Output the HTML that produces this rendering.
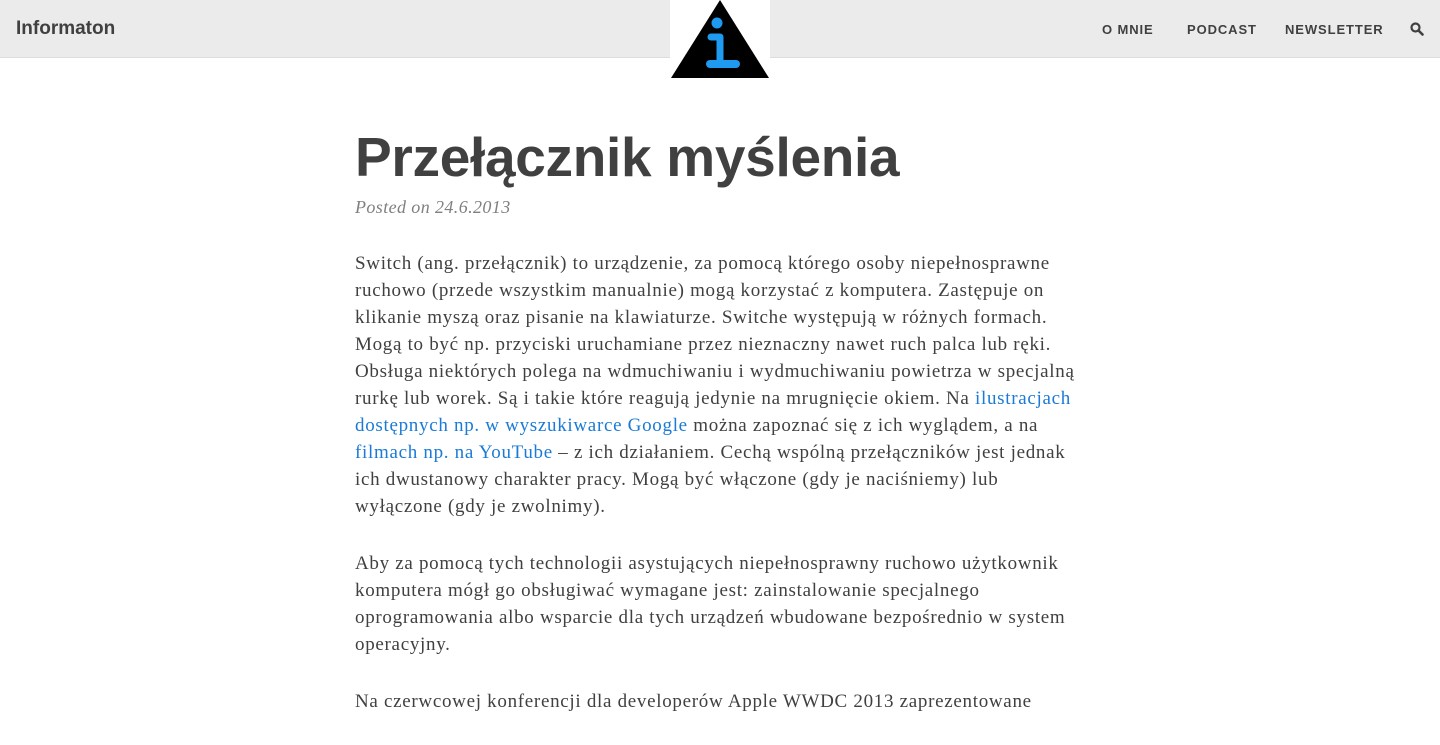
<!DOCTYPE html>
<html><head><meta charset="utf-8"><style>
*{margin:0;padding:0;box-sizing:border-box}
body{width:1440px;height:720px;overflow:hidden;background:#fff;font-family:"Liberation Serif",serif;color:#404040}
.hdr{position:absolute;left:0;top:0;width:1440px;height:58px;background:#ebebeb;border-bottom:1px solid #ddd}
.brand{position:absolute;left:16px;top:18px;font:bold 19px "Liberation Sans",sans-serif;color:#404040}
.nav{position:absolute;top:22px;font:bold 13px "Liberation Sans",sans-serif;letter-spacing:0.9px;color:#404040}
.logo{position:absolute;left:670px;top:0;width:100px;height:80px;background:#fff}
h1{position:absolute;left:355px;top:125px;font:bold 55px "Liberation Sans",sans-serif;color:#404040;letter-spacing:-0.3px;white-space:nowrap}
.meta{position:absolute;left:355px;top:197px;font-style:italic;font-size:18px;letter-spacing:0.4px;color:#808080}
.post{position:absolute;left:355px;top:250px;width:760px;font-size:19px;letter-spacing:0.7px;line-height:27px;color:#404040;white-space:nowrap}
.post p{margin-bottom:30px}
a{color:#1a7ad6;text-decoration:none}
</style></head><body>
<div class="hdr">
<div class="brand">Informaton</div>
<div class="nav" style="left:1102px">O MNIE</div>
<div class="nav" style="left:1187px">PODCAST</div>
<div class="nav" style="left:1285px">NEWSLETTER</div>
<svg style="position:absolute;left:1410px;top:22px" width="14" height="14" viewBox="0 0 14 14"><circle cx="5.5" cy="5.5" r="4" fill="none" stroke="#404040" stroke-width="2.2"/><line x1="8.5" y1="8.5" x2="12.5" y2="12.5" stroke="#404040" stroke-width="2.6" stroke-linecap="round"/></svg>
</div>
<div class="logo"><svg width="100" height="80" viewBox="0 0 100 80"><polygon points="50,0 99,78 1,78" fill="#000"/><circle cx="47" cy="23" r="5.5" fill="#1e9af0"/><path d="M41 37 H50 V62" fill="none" stroke="#1e9af0" stroke-width="7" stroke-linecap="round" stroke-linejoin="round"/><line x1="40" y1="64" x2="66" y2="64" stroke="#1e9af0" stroke-width="8" stroke-linecap="round"/></svg></div>
<h1>Przełącznik myślenia</h1>
<div class="meta">Posted on 24.6.2013</div>
<div class="post">
<p>Switch (ang. przełącznik) to urządzenie, za pomocą którego osoby niepełnosprawne<br>ruchowo (przede wszystkim manualnie) mogą korzystać z komputera. Zastępuje on<br>klikanie myszą oraz pisanie na klawiaturze. Switche występują w różnych formach.<br>Mogą to być np. przyciski uruchamiane przez nieznaczny nawet ruch palca lub ręki.<br>Obsługa niektórych polega na wdmuchiwaniu i wydmuchiwaniu powietrza w specjalną<br>rurkę lub worek. Są i takie które reagują jedynie na mrugnięcie okiem. Na <a>ilustracjach</a><br><a>dostępnych np. w wyszukiwarce Google</a> można zapoznać się z ich wyglądem, a na<br><a>filmach np. na YouTube</a> – z ich działaniem. Cechą wspólną przełączników jest jednak<br>ich dwustanowy charakter pracy. Mogą być włączone (gdy je naciśniemy) lub<br>wyłączone (gdy je zwolnimy).</p>
<p>Aby za pomocą tych technologii asystujących niepełnosprawny ruchowo użytkownik<br>komputera mógł go obsługiwać wymagane jest: zainstalowanie specjalnego<br>oprogramowania albo wsparcie dla tych urządzeń wbudowane bezpośrednio w system<br>operacyjny.</p>
<p>Na czerwcowej konferencji dla developerów Apple WWDC 2013 zaprezentowane</p>
</div>
</body></html>
